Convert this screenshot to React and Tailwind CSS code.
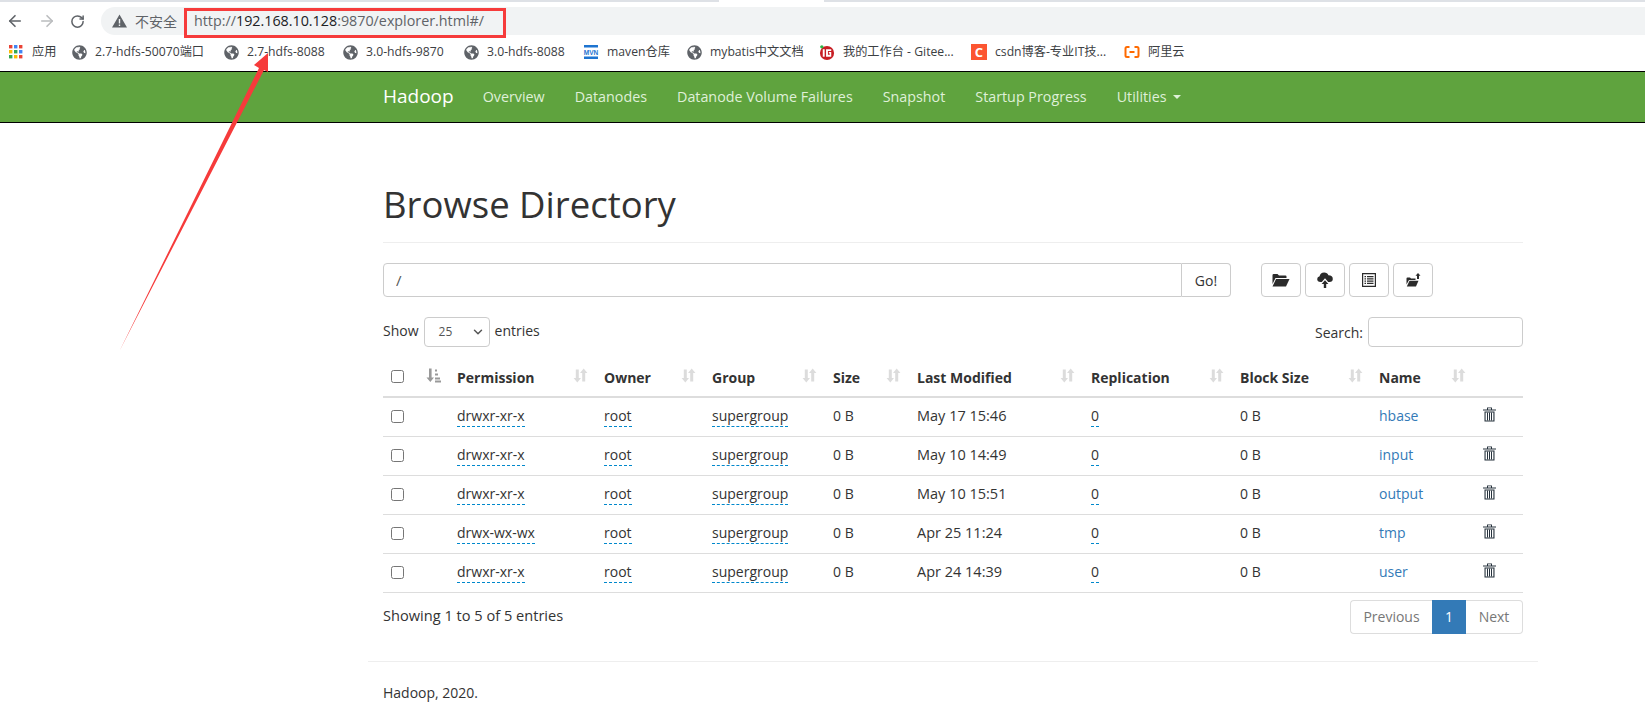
import React from "react";
import { ArrowLeft, ArrowRight, RotateCw, ChevronDown } from "lucide-react";
import { FaGlobeAmericas } from "react-icons/fa";

const Globe = () => <FaGlobeAmericas className="text-[15px] text-[#5f6368]" />;

const AppsIcon = () => (
  <svg width="14" height="14" viewBox="0 0 14 14">
    {["#ea4335", "#4285f4", "#ea4335", "#fbbc05", "#34a853", "#4285f4", "#34a853", "#fbbc05", "#ea4335"].map((c, i) => (
      <rect key={i} x={(i % 3) * 5} y={Math.floor(i / 3) * 5} width="3.4" height="3.4" fill={c} />
    ))}
  </svg>
);

const MvnIcon = () => (
  <svg width="16" height="16" viewBox="0 0 16 16">
    <rect x="1" y="1" width="14" height="2.5" fill="#1e74d0" />
    <rect x="1" y="12.5" width="14" height="2.5" fill="#1e74d0" />
    <text x="8" y="10.5" textAnchor="middle" fontSize="6.5" fontWeight="700" fill="#1e74d0" fontFamily="Liberation Sans, sans-serif">MVN</text>
  </svg>
);

const GiteeIcon = () => (
  <svg width="17" height="17" viewBox="0 0 17 17">
    <circle cx="8.5" cy="9" r="7.5" fill="#c71d23" />
    <circle cx="3" cy="2.5" r="1.8" fill="#2fb344" />
    <rect x="4" y="5" width="2" height="8" fill="#fff" />
    <path d="M7.5 5H13V7H9.5V11H11.5V9.5H10.5V8H13V13H7.5Z" fill="#fff" />
  </svg>
);

const CsdnIcon = () => (
  <div className="w-4 h-4 bg-[#fc5531] text-white text-[13px] leading-4 text-center font-bold">C</div>
);

const AliIcon = () => (
  <svg width="16" height="16" viewBox="0 0 16 16" fill="none" stroke="#ff6a00" strokeWidth="2">
    <path d="M5.5 3H3Q1.5 3 1.5 4.5V11.5Q1.5 13 3 13H5.5M10.5 3H13Q14.5 3 14.5 4.5V11.5Q14.5 13 13 13H10.5M5.5 8H10.5" />
  </svg>
);

const bookmarks = [
  { label: "应用", icon: <AppsIcon />, cls: "w-[63px]" },
  { label: "2.7-hdfs-50070端口", icon: <Globe />, cls: "w-[152px]" },
  { label: "2.7-hdfs-8088", icon: <Globe />, cls: "w-[119px]" },
  { label: "3.0-hdfs-9870", icon: <Globe />, cls: "w-[121px]" },
  { label: "3.0-hdfs-8088", icon: <Globe />, cls: "w-[120px]" },
  { label: "maven仓库", icon: <MvnIcon />, cls: "w-[103px]" },
  { label: "mybatis中文文档", icon: <Globe />, cls: "w-[133px]" },
  { label: "我的工作台 - Gitee...", icon: <GiteeIcon />, cls: "w-[152px]" },
  { label: "csdn博客-专业IT技...", icon: <CsdnIcon />, cls: "w-[153px]" },
  { label: "阿里云", icon: <AliIcon />, cls: "w-[80px]" },
];

const navLinks = ["Overview", "Datanodes", "Datanode Volume Failures", "Snapshot", "Startup Progress"];

const SortIcon = ({ active }) => (
  <svg width="15" height="15" viewBox="0 0 15 14" className="absolute right-2 top-[17px]">
    {active ? (
      <g fill="#999">
        <path d="M3 0H5.6V9H8L4.3 13.5L0.5 9H3Z" />
        <path d="M9 1H11V3H9ZM9 5H12V7H9ZM9 9H14V11H9ZM9 12H15V14H9Z" />
      </g>
    ) : (
      <g fill="#dcdcdc">
        <path d="M2.8 1H5.8V9.5H8L4.3 14L0.6 9.5H2.8Z" />
        <path d="M9.2 13H12.2V4.5H14.4L10.7 0L7 4.5H9.2Z" />
      </g>
    )}
  </svg>
);

const TrashIcon = () => (
  <svg width="13" height="15" viewBox="0 0 13 15" className="text-[#26323d] -mt-[2px]">
    <path d="M0 2.4H4V0.5H9V2.4H13V3.6H0ZM5 1.3V2.4H8V1.3Z" fill="currentColor" />
    <path d="M1.5 4.5H11.5V14.5H1.5ZM2.6 5.5V13.5H10.4V5.5Z" fill="currentColor" />
    <path d="M4 5.5H5V13.5H4ZM6 5.5H7V13.5H6ZM8 5.5H9V13.5H8Z" fill="currentColor" />
  </svg>
);

const FolderOpenIcon = () => (
  <svg width="18" height="14" viewBox="0 0 18 14" fill="#2b2b2b">
    <path d="M0.5 2.2Q0.5 1 1.7 1H5.5L7 2.5H13.5Q14.5 2.5 14.5 3.5V5H3.5L0.5 11Z" />
    <path d="M4 6H17.5L14 13.5H0.5Z" />
  </svg>
);

const CloudUploadIcon = () => (
  <svg width="16" height="16" viewBox="0 0 16 16" fill="#2b2b2b">
    <path d="M3.5 10Q0.2 9.8 0.2 7Q0.2 4.7 2.6 4.3Q3.2 0.5 7.2 0.5Q10.4 0.5 11.4 3.3Q15.8 3.4 15.8 6.9Q15.8 9.7 12.5 10H11.2L8 6.2L4.8 10Z" />
    <path d="M8 8.2L11.4 12H9.2V16H6.8V12H4.6Z" />
  </svg>
);

const ListAltIcon = () => (
  <svg width="14" height="14" viewBox="0 0 14 14" fill="#2b2b2b">
    <path d="M0 0H14V14H0ZM1.2 1.2V12.8H12.8V1.2Z" />
    <path d="M2.5 3H4V4.2H2.5ZM5 3H11.5V4.2H5ZM2.5 5.2H4V6.4H2.5ZM5 5.2H11.5V6.4H5ZM2.5 7.5H4V8.7H2.5ZM5 7.5H11.5V8.7H5ZM2.5 9.8H4V11H2.5ZM5 9.8H11.5V11H5Z" />
  </svg>
);

const FolderUpIcon = () => (
  <svg width="15" height="14" viewBox="0 0 15 14" fill="#2b2b2b">
    <path d="M0.5 5.5Q0.5 4.5 1.5 4.5H4L5 5.5H9.5V7H3L0.5 11.5Z" />
    <path d="M3.5 7.8H12.5L10 13.5H0.8Z" />
    <path d="M12 0L14.5 2.8H13V6H11V2.8H9.5Z" />
  </svg>
);

const columns = [
  { label: "Permission", cls: "w-[147px]" },
  { label: "Owner", cls: "w-[108px]" },
  { label: "Group", cls: "w-[121px]" },
  { label: "Size", cls: "w-[84px]" },
  { label: "Last Modified", cls: "w-[174px]" },
  { label: "Replication", cls: "w-[149px]" },
  { label: "Block Size", cls: "w-[139px]" },
  { label: "Name", cls: "w-[103px]" },
];

const rows = [
  ["drwxr-xr-x", "May 17 15:46", "hbase"],
  ["drwxr-xr-x", "May 10 14:49", "input"],
  ["drwxr-xr-x", "May 10 15:51", "output"],
  ["drwx-wx-wx", "Apr 25 11:24", "tmp"],
  ["drwxr-xr-x", "Apr 24 14:39", "user"],
];

const Editable = ({ children }) => (
  <span className="border-b border-dashed border-[#0088cc] pb-px">{children}</span>
);

const toolBtn = "w-10 h-[34px] border border-[#ccc] rounded flex items-center justify-center bg-white";

export default function App() {
  return (
    <div className="relative w-[1645px] h-[727px] overflow-hidden bg-white text-[14px] text-[#333] font-['Open_Sans','Noto_Sans_CJK_SC',sans-serif]">
      {/* Browser chrome */}
      <div className="h-[2px] flex bg-[#dee1e6]">
        <div className="w-[105px] ml-[719px] bg-white" />
      </div>
      <div className="h-[34px] flex items-center pt-1">
        <div className="flex items-center gap-[14px] pl-[6px] w-[101px] text-[#5f6368]">
          <ArrowLeft size={18} strokeWidth={2.2} />
          <ArrowRight size={18} strokeWidth={2.2} className="text-[#bbbdbf]" />
          <RotateCw size={15} strokeWidth={2.4} />
        </div>
        <div className="flex-1 h-[28px] bg-[#f1f3f4] rounded-l-full flex items-center pl-[11px] text-[14.3px] text-[#5f6368]">
          <svg width="15" height="14" viewBox="0 0 15 14" fill="#5f6368">
            <path d="M7.5 0.5L15 13.5H0ZM6.8 5V9.5H8.2V5ZM6.8 10.5V12H8.2V10.5Z" fillRule="evenodd" />
          </svg>
          <span className="ml-[8px] text-[14px]">不安全</span>
          <span className="ml-[17px] whitespace-nowrap">
            http://<span className="text-[#202124]">192.168.10.128</span>:9870/explorer.html#/
          </span>
        </div>
      </div>
      <div className="h-[35px] flex items-center pl-2 pb-[2px] text-[12.2px] text-[#3c4043]">
        {bookmarks.map((b) => (
          <div key={b.label} className={`${b.cls} shrink-0 flex items-center gap-2 whitespace-nowrap`}>
            <span className="flex w-4 justify-center">{b.icon}</span>
            <span>{b.label}</span>
          </div>
        ))}
      </div>

      {/* Navbar */}
      <div className="h-[52px] bg-[#5fa33e] border-y border-black">
        <div className="w-[1170px] ml-[368px] px-[15px] pb-px h-full flex items-center text-[14.3px] text-[#dff0d8]">
          <span className="text-[19px] text-white mr-[29px]">Hadoop</span>
          <div className="flex items-center gap-[30px]">
            {navLinks.map((l) => (
              <span key={l}>{l}</span>
            ))}
            <span className="flex items-center gap-[6px]">
              Utilities
              <span className="w-0 h-0 border-x-4 border-x-transparent border-t-4 border-t-[#dff0d8]" />
            </span>
          </div>
        </div>
      </div>

      {/* Page */}
      <div className="w-[1170px] ml-[368px]">
        <div className="px-[15px]">
          <div className="pt-[61px] border-b border-[#eee] h-[120px]">
            <h1 className="text-[36.5px] leading-[40px]">Browse Directory</h1>
          </div>

          <div className="flex mt-[20px]">
            <div className="flex w-[848px]">
              <input
                readOnly
                value="/"
                className="flex-1 h-[34px] border border-[#ccc] rounded-l px-3 text-[15px] text-[#555] outline-none"
              />
              <div className="w-[49px] h-[34px] border border-l-0 border-[#ccc] rounded-r flex items-center justify-center">Go!</div>
            </div>
            <div className="flex gap-1 ml-[30px]">
              <div className={toolBtn}><FolderOpenIcon /></div>
              <div className={toolBtn}><CloudUploadIcon /></div>
              <div className={toolBtn}><ListAltIcon /></div>
              <div className={toolBtn}><FolderUpIcon /></div>
            </div>
          </div>

          <div className="flex justify-between items-center mt-[20px]">
            <div className="flex items-center -translate-y-[2px]">
              Show
              <div className="w-[66px] h-[30px] mx-[5px] border border-[#ccc] rounded flex items-center justify-between pl-[14px] pr-[4px] text-[12px] text-[#555] translate-y-[2px]">
                25
                <ChevronDown size={14} strokeWidth={2.5} />
              </div>
              entries
            </div>
            <div className="flex items-center">
              Search:
              <input readOnly className="w-[155px] h-[30px] ml-[5px] border border-[#ccc] rounded outline-none" />
            </div>
          </div>

          <table className="w-[1140px] table-fixed mt-[4px] border-collapse">
            <thead>
              <tr className="h-[46px] border-b-2 border-[#ddd]">
                <th className="relative w-[66px] pl-2 pb-[13px] text-left align-bottom">
                  <input type="checkbox" className="block" />
                  <SortIcon active />
                </th>
                {columns.map((c) => (
                  <th key={c.label} className={`relative ${c.cls} px-2 pb-[8px] text-left font-bold align-bottom`}>
                    {c.label}
                    <SortIcon />
                  </th>
                ))}
                <th />
              </tr>
            </thead>
            <tbody>
              {rows.map(([perm, date, name]) => (
                <tr key={name} className="h-[39px] border-b border-[#ddd]">
                  <td className="pl-2"><input type="checkbox" className="block" /></td>
                  <td className="px-2 pb-[2px]"><Editable>{perm}</Editable></td>
                  <td className="px-2 pb-[2px]"><Editable>root</Editable></td>
                  <td className="px-2 pb-[2px]"><Editable>supergroup</Editable></td>
                  <td className="px-2 pb-[2px]">0 B</td>
                  <td className="px-2 pb-[2px] text-[14.5px]">{date}</td>
                  <td className="px-2 pb-[2px]"><Editable>0</Editable></td>
                  <td className="px-2 pb-[2px]">0 B</td>
                  <td className="px-2 pb-[2px] text-[#337ab7]">{name}</td>
                  <td className="pl-[9px] pb-[2px]"><TrashIcon /></td>
                </tr>
              ))}
            </tbody>
          </table>

          <div className="flex justify-between items-center mt-[7px]">
            <span className="text-[14.6px] -translate-y-px">Showing 1 to 5 of 5 entries</span>
            <div className="flex h-[34px] text-[#777]">
              <div className="w-[82px] border border-r-0 border-[#ddd] rounded-l flex items-center justify-center">Previous</div>
              <div className="w-[34px] bg-[#337ab7] text-white flex items-center justify-center">1</div>
              <div className="w-[57px] border border-l-0 border-[#ddd] rounded-r flex items-center justify-center">Next</div>
            </div>
          </div>
        </div>

        <div className="mt-[27px] border-t border-[#eee] px-[15px] pt-[20px]">Hadoop, 2020.</div>
      </div>

      {/* Red annotations drawn over the screenshot */}
      <div className="absolute left-[184px] top-[8px] w-[322px] h-[30px] border-[3px] border-[#f63b3b]" />
      <svg className="absolute left-0 top-0 pointer-events-none" width="400" height="400">
        <polygon points="120,350 259,68 254,65 268,53 268,72 264,70" fill="#f63b3b" />
      </svg>
    </div>
  );
}
